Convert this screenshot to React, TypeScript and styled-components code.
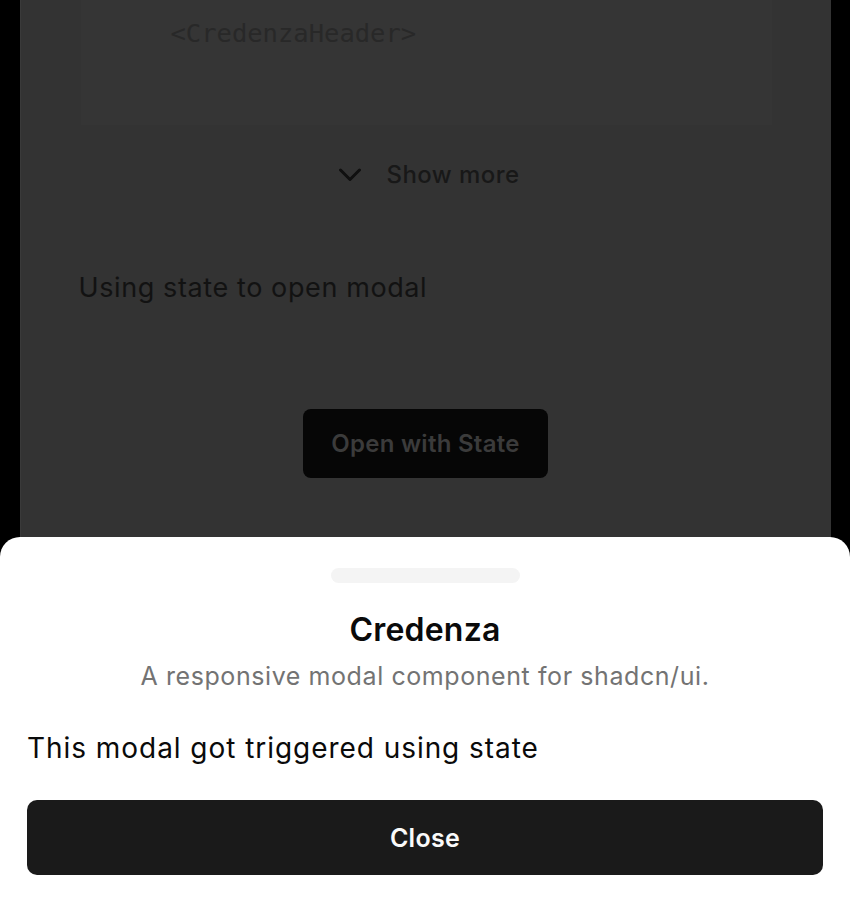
import React from "react";
import styled, { createGlobalStyle } from "styled-components";

const Global = createGlobalStyle`
  html, body { margin: 0; padding: 0; background: #000; }
  body { font-family: Inter, "Noto Sans", sans-serif; overflow: hidden; }
  #root { min-height: 901px; }
`;

const Frame = styled.div`
  display: flex;
  justify-content: center;
  height: 901px;
  background: #000;
`;

const Page = styled.main`
  width: 810px;
  background: #333333;
  display: flex;
  flex-direction: column;
  align-items: stretch;
  border-left: 1px solid #3a3a3a;
`;

const CodeBlock = styled.pre`
  margin: 0 59px 0 60px;
  height: 125px;
  box-sizing: border-box;
  padding: 16px 0 0 90px;
  background: #353535;
  font-family: "DejaVu Sans Mono", "Liberation Mono", monospace;
  font-size: 25.5px;
  line-height: 34px;
  color: #282828;
`;

const ShowMore = styled.button`
  align-self: center;
  margin: 35px 0 0 8px;
  display: flex;
  align-items: center;
  gap: 25px;
  background: none;
  border: none;
  padding: 0;
  font-family: Inter, sans-serif;
  font-size: 24px;
  letter-spacing: 0.45px;
  font-weight: 500;
  color: #181818;
  cursor: pointer;
`;

const Heading = styled.p`
  margin: 83px 0 0 58px;
  font-size: 27px;
  letter-spacing: 0.6px;
  line-height: 32px;
  color: #121212;
`;

const OpenButton = styled.button`
  align-self: center;
  margin-top: 105px;
  width: 245px;
  height: 69px;
  border: none;
  border-radius: 8px;
  background: #060606;
  color: #3b3b3b;
  font-family: Inter, sans-serif;
  font-size: 24px;
  letter-spacing: 0.27px;
  font-weight: 600;
`;

const Sheet = styled.section`
  position: fixed;
  left: 0;
  right: 0;
  top: 537px;
  bottom: 0;
  background: #fff;
  border-radius: 20px 20px 0 0;
  display: flex;
  flex-direction: column;
  padding: 31px 27px 0;
`;

const Handle = styled.div`
  align-self: center;
  width: 189px;
  height: 15px;
  border-radius: 8px;
  background: #f4f4f4;
`;

const Title = styled.h2`
  margin: 28px 0 0;
  text-align: center;
  font-size: 32px;
  letter-spacing: 0.2px;
  line-height: 38px;
  font-weight: 600;
  color: #0a0a0a;
`;

const Description = styled.p`
  margin: 11px 0 0;
  text-align: center;
  font-size: 25px;
  letter-spacing: 0.58px;
  line-height: 32px;
  color: #737373;
`;

const Body = styled.p`
  margin: 39px 0 0 0;
  font-size: 28px;
  letter-spacing: 0.95px;
  line-height: 34px;
  color: #0a0a0a;
`;

const CloseButton = styled.button`
  margin-top: 35px;
  height: 75px;
  width: 100%;
  border: none;
  border-radius: 10px;
  background: #1a1a1a;
  color: #fafafa;
  font-family: Inter, sans-serif;
  font-size: 25px;
  letter-spacing: 0.3px;
  font-weight: 600;
`;

const Chevron = () => (
  <svg width="22" height="16" viewBox="0 0 22 16" fill="none" stroke="#101010" strokeWidth="3" strokeLinecap="round" strokeLinejoin="round">
    <path d="M1.5 3 L11 12.5 L20.5 3" />
  </svg>
);

export default function App() {
  return (
    <>
      <Global />
      <Frame>
        <Page>
          <CodeBlock>{"<CredenzaHeader>"}</CodeBlock>
          <ShowMore>
            <Chevron />
            Show more
          </ShowMore>
          <Heading>Using state to open modal</Heading>
          <OpenButton>Open with State</OpenButton>
        </Page>
      </Frame>
      <Sheet>
        <Handle />
        <Title>Credenza</Title>
        <Description>A responsive modal component for shadcn/ui.</Description>
        <Body>This modal got triggered using state</Body>
        <CloseButton>Close</CloseButton>
      </Sheet>
    </>
  );
}
